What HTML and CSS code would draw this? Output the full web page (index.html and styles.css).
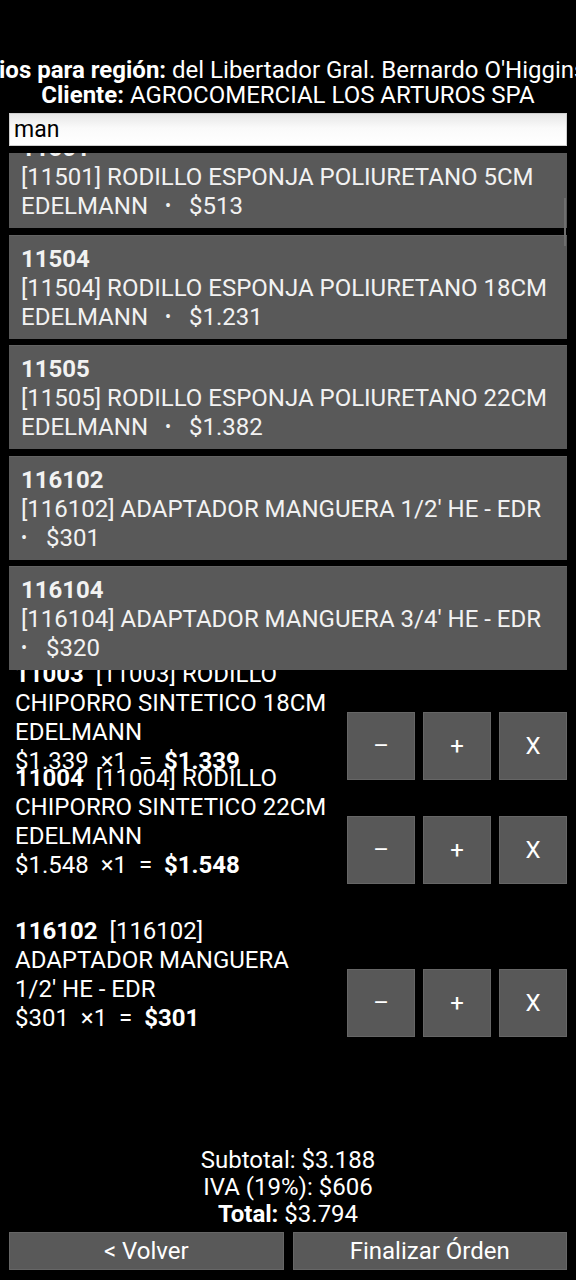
FILE: index.html
```html
<!DOCTYPE html>
<html lang="es">
<head>
<meta charset="utf-8">
<title>Orden</title>
<link rel="stylesheet" href="styles.css">
</head>
<body>
<div class="page">
  <header class="header">
    <div class="line line-region"><span><b>Precios para región:</b> del Libertador Gral. Bernardo O'Higgins</span></div>
    <div class="line"><span><b>Cliente:</b> AGROCOMERCIAL LOS ARTUROS SPA</span></div>
  </header>

  <div class="search">
    <div class="search-input">man</div>
    <div class="dropdown">
      <div class="dropdown-list">
        <div class="item"><b>11501</b><br>[11501] RODILLO ESPONJA POLIURETANO 5CM<br>EDELMANN <span class="dot">•</span> $513</div>
        <div class="item"><b>11504</b><br>[11504] RODILLO ESPONJA POLIURETANO 18CM<br>EDELMANN <span class="dot">•</span> $1.231</div>
        <div class="item"><b>11505</b><br>[11505] RODILLO ESPONJA POLIURETANO 22CM<br>EDELMANN <span class="dot">•</span> $1.382</div>
        <div class="item"><b>116102</b><br>[116102] ADAPTADOR MANGUERA 1/2' HE - EDR<br><span class="dot first">•</span> $301</div>
        <div class="item"><b>116104</b><br>[116104] ADAPTADOR MANGUERA 3/4' HE - EDR<br><span class="dot first">•</span> $320</div>
      </div>
      <div class="scrollbar"></div>
    </div>
  </div>

  <main class="cart">
    <div class="cart-row row-a">
      <div class="cart-text"><b>11003</b>&nbsp; [11003] RODILLO CHIPORRO SINTETICO 18CM EDELMANN<br>$1.339 &nbsp;×1 &nbsp;= &nbsp;<b>$1.339</b></div>
      <div class="cart-btns"><button class="btn">–</button><button class="btn">+</button><button class="btn">X</button></div>
    </div>
    <div class="cart-row row-b">
      <div class="cart-text"><b>11004</b>&nbsp; [11004] RODILLO CHIPORRO SINTETICO 22CM EDELMANN<br>$1.548 &nbsp;×1 &nbsp;= &nbsp;<b>$1.548</b></div>
      <div class="cart-btns"><button class="btn">–</button><button class="btn">+</button><button class="btn">X</button></div>
    </div>
    <div class="cart-row">
      <div class="cart-text"><b>116102</b>&nbsp; [116102] ADAPTADOR MANGUERA 1/2' HE - EDR<br>$301 &nbsp;×1 &nbsp;= &nbsp;<b>$301</b></div>
      <div class="cart-btns"><button class="btn">–</button><button class="btn">+</button><button class="btn">X</button></div>
    </div>
  </main>

  <section class="totals">
    <div>Subtotal: $3.188</div>
    <div>IVA (19%): $606</div>
    <div><b>Total:</b> $3.794</div>
  </section>

  <footer class="footer">
    <button class="fbtn">&lt; Volver</button>
    <button class="fbtn">Finalizar Órden</button>
  </footer>
</div>
</body>
</html>
```

FILE: styles.css
```css
html, body {
  margin: 0;
  padding: 0;
  background: #000;
}
body {
  font-family: Roboto, "Noto Sans", sans-serif;
  color: #fff;
  overflow: hidden;
}
.page {
  height: 1280px;
  display: flex;
  flex-direction: column;
  overflow: hidden;
}
.header {
  padding-top: 58px;
  font-size: 24px;
  line-height: 25px;
}
.line {
  display: flex;
  justify-content: center;
  white-space: nowrap;
}
.line-region span {
  margin-left: -40px;
}
.search {
  position: relative;
  margin: 5px 9px 0;
}
.search-input {
  height: 33px;
  box-sizing: border-box;
  border: 1px solid #cfcfcf;
  background: linear-gradient(#e6e6e6, #fafafa 45%, #fff);
  color: #000;
  font-size: 23px;
  line-height: 31px;
  padding-left: 4px;
}
.dropdown {
  position: absolute;
  left: 0;
  right: 0;
  top: 40px;
  height: 517px;
  overflow: hidden;
  z-index: 2;
}
.dropdown-list {
  margin-top: -29px;
  display: flex;
  flex-direction: column;
  gap: 6.5px;
}
.item {
  background: #595959;
  color: #f2f2f2;
  font-size: 24px;
  line-height: 29px;
  height: 104px;
  box-sizing: border-box;
  padding: 9px 12px 0;
  white-space: nowrap;
  border-top: 1px solid #636363;
}
.dot {
  font-size: 18px;
  line-height: 0;
  vertical-align: 2px;
  margin: 0 12px 0 11px;
}
.dot.first {
  margin-left: 0;
  margin-right: 13px;
}
.scrollbar {
  position: absolute;
  right: 1px;
  top: 45px;
  width: 2px;
  height: 48px;
  background: #6e6e6e;
}
.cart {
  flex: 1;
  padding-top: 514px;
}
.cart-row {
  display: flex;
  align-items: flex-start;
  padding: 0 9px 0 15px;
}
.row-a { height: 104px; }
.row-b { height: 153px; }
.cart-text {
  width: 314px;
  font-size: 24px;
  line-height: 29px;
}
.cart-btns {
  margin-left: auto;
  margin-top: 52px;
  display: flex;
  gap: 8px;
}
.btn {
  width: 68px;
  height: 68px;
  background: #585858;
  border: 1px solid #666;
  color: #fff;
  font-family: Roboto, sans-serif;
  font-size: 24px;
  padding: 0;
}
.totals {
  text-align: center;
  font-size: 24px;
  line-height: 27px;
}
.footer {
  display: flex;
  gap: 9px;
  margin: 4px 9px 10px;
}
.fbtn {
  flex: 1;
  height: 38px;
  background: #595959;
  border: 1px solid #666;
  color: #fff;
  font-family: Roboto, sans-serif;
  font-size: 24px;
  padding: 0;
}
```
